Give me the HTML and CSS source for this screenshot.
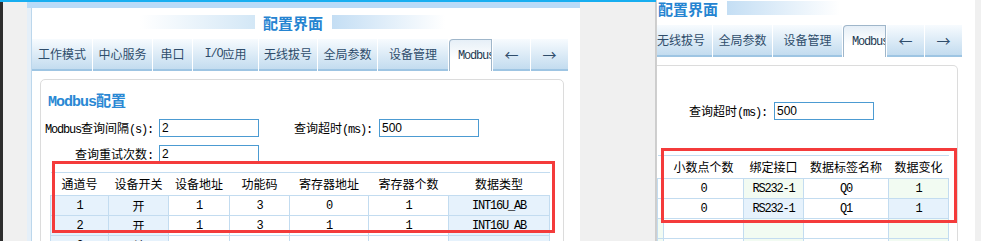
FILE: index.html
```html
<!DOCTYPE html>
<html lang="zh-CN">

<head>
  <meta charset="UTF-8">
  <title>配置界面</title>
  <link rel="stylesheet" href="styles.css">
</head>

<body>
  <div class="screen">
    <!-- 左边截图 -->
    <div class="shot shot-left">
      <div class="edge"></div>
      <div class="gutter"></div>
      <div class="page">
        <div class="page-top"></div>
        <div class="page-body">
          <div class="page-inner">
            <div class="header">
              <div class="bar"></div>
              <h1 class="title">配置界面</h1>
              <div class="bar bar-fade"></div>
            </div>
            <ul class="tabs">
              <li class="tab w60">工作模式</li>
              <li class="tab w59">中心服务</li>
              <li class="tab w39">串口</li>
              <li class="tab w65"><span class="en">I/O</span>应用</li>
              <li class="tab w58">无线拔号</li>
              <li class="tab w59">全局参数</li>
              <li class="tab w70">设备管理</li>
              <li class="tab tab-on"><span class="en">Modbus</span>配置</li>
              <li class="tab w37">←</li>
              <li class="tab w37">→</li>
            </ul>
            <div class="box">
              <h2 class="box-title"><span class="en">Modbus</span>配置</h2>
              <div class="form">
                <label><span class="en">Modbus</span>查询间隔<span class="en">(s):</span></label>
                <input type="text" value="2">
                <label>查询超时<span class="en">(ms):</span></label>
                <input type="text" value="500">
                <label>查询重试次数<span class="en">:</span></label>
                <input type="text" value="2">
              </div>
              <div class="grid-wrap">
                <table class="grid">
                  <colgroup>
                    <col class="c58"><col class="c60"><col class="c61"><col class="c60"><col class="c79"><col class="c80"><col class="c101">
                    <col class="c80"><col class="c60"><col class="c85"><col class="c60">
                  </colgroup>
                  <tr>
                    <th>通道号</th><th>设备开关</th><th>设备地址</th><th>功能码</th><th>寄存器地址</th><th>寄存器个数</th><th>数据类型</th>
                    <th>小数点个数</th><th>绑定接口</th><th>数据标签名称</th><th>数据变化</th>
                  </tr>
                  <tr>
                    <td class="blue">1</td><td class="blue cn">开</td><td>1</td><td>3</td><td>0</td><td>1</td><td class="blue">INT16U_AB</td>
                    <td>0</td><td class="green">RS232-1</td><td>Q0</td><td class="green">1</td>
                  </tr>
                  <tr>
                    <td class="blue">2</td><td class="blue cn">开</td><td>1</td><td>3</td><td>1</td><td>1</td><td class="blue">INT16U_AB</td>
                    <td>0</td><td class="blue">RS232-1</td><td>Q1</td><td class="blue">1</td>
                  </tr>
                  <tr>
                    <td class="blue">3</td><td class="blue cn">关</td><td></td><td></td><td></td><td></td><td class="blue"></td>
                    <td></td><td class="green"></td><td></td><td class="green"></td>
                  </tr>
                </table>
              </div>
            </div>
          </div>
        </div>
      </div>
      <div class="gutter gutter-right"></div>
      <div class="mark mark-left"></div>
    </div>

    <!-- 右边截图 -->
    <div class="shot shot-right">
      <div class="page page-r">
        <div class="header header-r">
          <h1 class="title">配置界面</h1>
          <div class="bar bar-fade"></div>
        </div>
        <ul class="tabs">
          <li class="tab tab-cut">无线拔号</li>
          <li class="tab w59">全局参数</li>
          <li class="tab w69">设备管理</li>
          <li class="tab tab-on"><span class="en">Modbus</span>配置</li>
          <li class="tab w37">←</li>
          <li class="tab w37">→</li>
        </ul>
        <div class="box box-r">
          <div class="form form-r">
            <label>查询超时<span class="en">(ms):</span></label>
            <input type="text" value="500">
          </div>
          <table class="grid grid-r">
            <colgroup>
              <col class="c6"><col class="c80"><col class="c60"><col class="c85"><col class="c60">
            </colgroup>
            <tr>
              <th></th><th>小数点个数</th><th>绑定接口</th><th>数据标签名称</th><th>数据变化</th>
            </tr>
            <tr>
              <td></td><td>0</td><td class="green">RS232-1</td><td>Q0</td><td class="green">1</td>
            </tr>
            <tr>
              <td></td><td>0</td><td class="blue">RS232-1</td><td>Q1</td><td class="blue">1</td>
            </tr>
            <tr>
              <td class="green"></td><td></td><td class="green"></td><td></td><td class="green"></td>
            </tr>
            <tr>
              <td class="green"></td><td></td><td class="green"></td><td></td><td class="green"></td>
            </tr>
          </table>
        </div>
      </div>
      <div class="mark mark-right"></div>
    </div>
  </div>
</body>

</html>
```

FILE: styles.css
```css
* {
  margin: 0;
  padding: 0;
  box-sizing: border-box;
}

body {
  width: 981px;
  height: 241px;
  overflow: hidden;
  background: #f0f0f0;
  font: 12px/18px "Noto Sans CJK SC", sans-serif;
  color: #000;
}

.screen {
  display: flex;
  height: 241px;
}

.shot {
  position: relative;
  height: 241px;
  overflow: hidden;
}

/* 左边截图 */
.shot-left {
  width: 656px;
  display: flex;
  border-top: 2px solid #17aef0;
}

.edge {
  width: 3px;
  background: #2d2d2d;
}

.gutter {
  width: 24px;
  background: #f0f0f0;
}

.gutter-right {
  width: 76px;
  border-right: 1px solid #cdcdcd;
}

.page {
  width: 553px;
  background: #fff;
}

.page-top {
  height: 6px;
  background: #b9dbf8;
}

.page-body {
  height: 100%;
  border-left: 4px solid #e5eff8;
}

.page-inner {
  height: 100%;
  border-left: 1px solid #bcd7ec;
}

.en {
  font-family: "Liberation Mono", monospace;
  letter-spacing: -1.2px;
}

/* 标题 */
.header {
  display: flex;
  height: 30px;
  padding: 7px 0 0 108px;
}

.bar {
  width: 115px;
  height: 14px;
  background: linear-gradient(to right, #fff, #d3e7f6);
}

.bar-fade {
  width: 113px;
  background: linear-gradient(to right, #c4def4, #fff);
}

.title {
  margin: 0 9px 0 8px;
  font-size: 15px;
  line-height: 15px;
  font-weight: bold;
  color: #2584d1;
}

/* 选项卡 */
.tabs {
  display: flex;
  gap: 1px;
  margin-top: 1px;
  list-style: none;
}

.tab {
  height: 32px;
  display: flex;
  align-items: center;
  justify-content: center;
  white-space: nowrap;
  background: linear-gradient(#f7fbfe, #c3dcef);
  border-bottom: 2px solid #9ec5e3;
  color: #2f4d6b;
  font-size: 12px;
}

.w37 { width: 37px; font-size: 14px; }
.w39 { width: 39px; }
.w58 { width: 58px; }
.w59 { width: 59px; }
.w60 { width: 60px; }
.w65 { width: 65px; }
.w69 { width: 69px; }
.w70 { width: 70px; }

.tab-on {
  width: 43px;
  overflow: hidden;
  justify-content: flex-start;
  padding-left: 8px;
  background: linear-gradient(#e6eff7, #fff 60%);
  border: 1px solid #9fb6ca;
  border-bottom: none;
  border-radius: 4px 0 0 0;
  color: #243a52;
}

/* 内容框 */
.box {
  width: 524px;
  height: 200px;
  margin: 8px 0 0 8px;
  padding-top: 12px;
  border: 1px solid #dcdcdc;
  border-radius: 5px;
}

.box-title {
  padding-left: 7px;
  font-size: 15px;
  line-height: 16px;
  font-weight: bold;
  color: #2a88d4;
}

.box-title .en {
  letter-spacing: -1px;
}

.form {
  display: grid;
  grid-template-columns: 118px 100px 120px 100px;
  grid-auto-rows: 18px;
  row-gap: 8px;
  margin-top: 8px;
}

.form label {
  height: 18px;
  overflow: hidden;
  text-align: right;
  padding-right: 6px;
  line-height: 18px;
  white-space: nowrap;
}

.form label:nth-of-type(2) {
  padding-right: 7px;
}

.form input {
  height: 18px;
  padding-left: 2px;
  border: 1px solid #4c9bd2;
  font: 12px "Liberation Sans", sans-serif;
  outline: none;
}

/* 表格 */
.grid-wrap {
  width: 500px;
  margin: 9px 0 0 9px;
  overflow: hidden;
}

.grid {
  border-collapse: collapse;
  table-layout: fixed;
  width: 784px;
  line-height: 16px;
}

.c6 { width: 6px; }
.c58 { width: 58px; }
.c60 { width: 60px; }
.c61 { width: 61px; }
.c79 { width: 79px; }
.c80 { width: 80px; }
.c85 { width: 85px; }
.c101 { width: 101px; }

.grid th {
  height: 23px;
  padding: 0;
  font-weight: normal;
  white-space: nowrap;
  border-top: 1px solid #c3dcf0;
  border-bottom: 1px solid #c3dcf0;
}

.grid td {
  height: 20px;
  padding: 0;
  text-align: center;
  border: 1px solid #c3dcf0;
  font-family: "Liberation Mono", "Noto Sans CJK SC", monospace;
  letter-spacing: -1.2px;
  white-space: nowrap;
}

.grid td.cn {
  font-family: "Noto Sans CJK SC", sans-serif;
  letter-spacing: 0;
}

.grid .blue {
  background: #e6f2fc;
}

.grid .green {
  background: #f2fbf2;
}

/* 红框 */
.mark {
  position: absolute;
  border: 3px solid #f43b3b;
}

.mark-left {
  left: 52px;
  top: 159px;
  width: 503px;
  height: 72px;
}

/* 右边截图 */
.shot-right {
  width: 325px;
  border-left: 1px solid #cfcfcf;
  background: #f0f0f0;
}

.page-r {
  width: 318px;
  height: 241px;
}

.header-r {
  height: 25px;
  padding: 0;
}

.header-r .title {
  margin: 1px 9px 0 1px;
}

.header-r .bar {
  margin-top: 1px;
}

.tab-cut {
  width: 55px;
  justify-content: flex-end;
  padding-right: 7px;
}

.shot-right .tabs {
  margin-top: 0;
}

.box-r {
  width: 301px;
  margin: 8px 0 0 0;
  padding-top: 36px;
  border-left: none;
  border-radius: 0 5px 0 0;
}

.form-r {
  grid-template-columns: 117px 100px;
  margin-top: 0;
}

.form-r label {
  padding-right: 7px;
}

.grid-r {
  width: 291px;
  margin-top: 35px;
}

.mark-right {
  left: 4px;
  top: 148px;
  width: 296px;
  height: 75px;
}
```
